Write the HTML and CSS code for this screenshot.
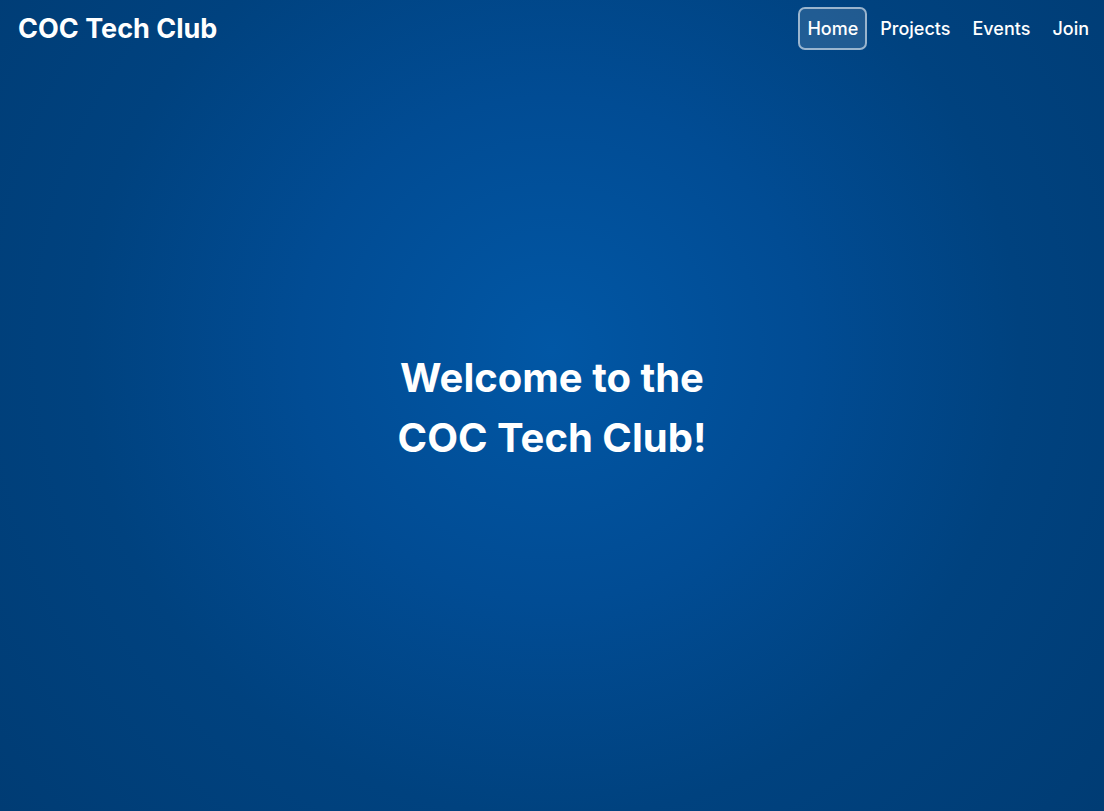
FILE: index.html
```html
<!DOCTYPE html>
<html lang="en">
<head>
<meta charset="utf-8">
<title>COC Tech Club</title>
<link rel="stylesheet" href="styles.css">
</head>
<body>
<div class="page">
  <header class="topbar">
    <div class="brand">COC Tech Club</div>
    <nav class="nav">
      <a class="nav-link active" href="#">Home</a>
      <a class="nav-link" href="#">Projects</a>
      <a class="nav-link" href="#">Events</a>
      <a class="nav-link" href="#">Join</a>
    </nav>
  </header>
  <main class="hero">
    <h1 class="hero-title">Welcome to the<br>COC Tech Club!</h1>
  </main>
</div>
</body>
</html>
```
FILE: styles.css
```css
html, body {
  margin: 0;
  padding: 0;
  height: 100%;
}
body {
  font-family: Inter, "Open Sans", "Liberation Sans", sans-serif;
  color: #ffffff;
  background: radial-gradient(circle at 50% 43%, #0157a5 0%, #014c94 35%, #00427f 65%, #003c74 100%);
}
.page {
  min-height: 100vh;
  display: flex;
  flex-direction: column;
}
.topbar {
  display: flex;
  align-items: center;
  justify-content: space-between;
  padding: 6px 6px 0 18px;
  height: 44px;
}
.brand {
  font-size: 27px;
  font-weight: 700;
  letter-spacing: 0;
}
.nav {
  display: flex;
  align-items: center;
  gap: 4px;
}
.nav-link {
  color: #ffffff;
  text-decoration: none;
  font-size: 18px;
  font-weight: 500;
  padding: 10px 7px 10px;
  border: 2px solid transparent;
  border-radius: 7px;
  line-height: 19px;
}
.nav-link.active {
  background: rgba(255, 255, 255, 0.13);
  border-color: rgba(255, 255, 255, 0.55);
}
.hero {
  flex: 1;
  display: flex;
  align-items: center;
  justify-content: center;
  padding-bottom: 45px;
}
.hero-title {
  margin: 0;
  text-align: center;
  font-size: 40px;
  font-weight: 700;
  line-height: 60px;
}
```
